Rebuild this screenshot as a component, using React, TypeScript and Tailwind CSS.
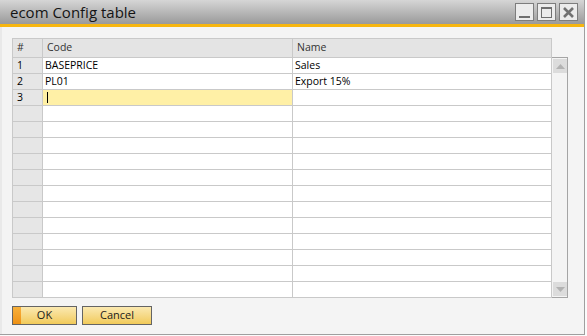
import React from "react";

const ROWS: { num: string; code: string; name: string }[] = [
  { num: "1", code: "BASEPRICE", name: "Sales" },
  { num: "2", code: "PL01", name: "Export 15%" },
  { num: "3", code: "", name: "" },
];
const TOTAL_ROWS = 15;

function WinButton({ kind }: { kind: "min" | "max" | "close" }) {
  return (
    <div className="flex h-[18px] w-[19px] items-center justify-center border border-[#7d7d7d] bg-[#ececec]">
      {kind === "min" && <div className="mt-[9px] h-[2px] w-[11px] bg-[#6f6f6f]" />}
      {kind === "max" && <div className="h-[11px] w-[11px] border border-t-2 border-[#6f6f6f]" />}
      {kind === "close" && (
        <svg width="11" height="11" viewBox="0 0 11 11">
          <path d="M1 1 L10 10 M10 1 L1 10" stroke="#727272" strokeWidth="2.6" />
        </svg>
      )}
    </div>
  );
}

function Arrow({ up }: { up: boolean }) {
  return (
    <div className="flex h-[14px] w-[14px] items-center justify-center bg-[#dcdcdc]">
      <svg width="9" height="5" viewBox="0 0 9 5">
        <path d={up ? "M0 5 L4.5 0 L9 5 Z" : "M0 0 L4.5 5 L9 0 Z"} fill="#b2b2b2" />
      </svg>
    </div>
  );
}

export default function App() {
  const rows = Array.from({ length: TOTAL_ROWS }, (_, i) => ROWS[i] ?? { num: "", code: "", name: "" });

  return (
    <div
      className="h-[336px] w-[587px] overflow-hidden bg-[#fbfbfb] text-black"
      style={{ fontFamily: '"Open Sans", "Noto Sans", sans-serif' }}
    >
      <div className="flex h-[335px] w-[585px] flex-col border-r border-b border-[#9f9f9f]">
        {/* Title bar */}
        <div className="flex h-[24px] items-center justify-between bg-gradient-to-b from-[#d6d6d6] to-[#9a9a9a] pl-[10px] pr-[6px]">
          <span className="text-[15px] leading-none text-[#141414]">ecom Config table</span>
          <div className="flex gap-[3px]">
            <WinButton kind="min" />
            <WinButton kind="max" />
            <WinButton kind="close" />
          </div>
        </div>
        <div className="h-[3px] bg-[#f7b60f]" />

        {/* Body */}
        <div className="flex flex-1 flex-col border-l-2 border-[#e9e9e9] bg-[#f4f4f4] pl-[10px] pt-[11px] text-[10.5px]">
          <div className="flex">
            <div className="w-[540px] border-l border-t border-[#c9c9c9]">
              {/* Header */}
              <div className="flex h-[19px] bg-[#e4e4e4] text-[#333]">
                <div className="flex w-[30px] items-center border-r border-b border-[#c9c9c9] pl-[4px]">#</div>
                <div className="flex w-[250px] items-center border-r border-b border-[#c9c9c9] pl-[4px]">Code</div>
                <div className="flex w-[259px] items-center border-r border-b border-[#c9c9c9] pl-[4px]">Name</div>
              </div>
              {rows.map((r, i) => (
                <div key={i} className="flex h-[16px]">
                  <div className="flex w-[30px] items-center border-r border-b border-[#c9c9c9] bg-[#e6e6e6] pl-[4px]">
                    {r.num}
                  </div>
                  <div
                    className={
                      i === 2
                        ? "flex w-[250px] items-center border-r border-b border-[#c9c9c9] bg-[#fff0a6] pl-[4px]"
                        : "flex w-[250px] items-center border-r border-b border-[#c9c9c9] bg-white pl-[2px]"
                    }
                  >
                    {i === 2 ? <div className="h-[11px] w-px bg-black" /> : r.code}
                  </div>
                  <div className="flex w-[259px] items-center border-r border-b border-[#c9c9c9] bg-white pl-[2px]">
                    {r.name}
                  </div>
                </div>
              ))}
            </div>
            {/* Scrollbar */}
            <div className="mt-[19px] flex h-[241px] w-[16px] flex-col justify-between border-t border-r border-b border-[#a5a5a5] py-px pl-px">
              <Arrow up />
              <Arrow up={false} />
            </div>
          </div>

          {/* Buttons */}
          <div className="mt-[8px] flex gap-[5px]">
            <button className="relative flex h-[19px] w-[65px] items-center justify-center border border-[#646464] bg-gradient-to-b from-[#fbe9b0] to-[#f1ca58] text-[11px] text-[#1a1a1a]">
              <span className="absolute left-0 top-0 h-full w-[8px] bg-gradient-to-b from-[#f7b03a] to-[#ee9112]" />
              OK
            </button>
            <button className="flex h-[19px] w-[70px] items-center justify-center border border-[#646464] bg-gradient-to-b from-[#fbe9b0] to-[#f1ca58] text-[11px] text-[#1a1a1a]">
              Cancel
            </button>
          </div>
        </div>
      </div>
    </div>
  );
}
